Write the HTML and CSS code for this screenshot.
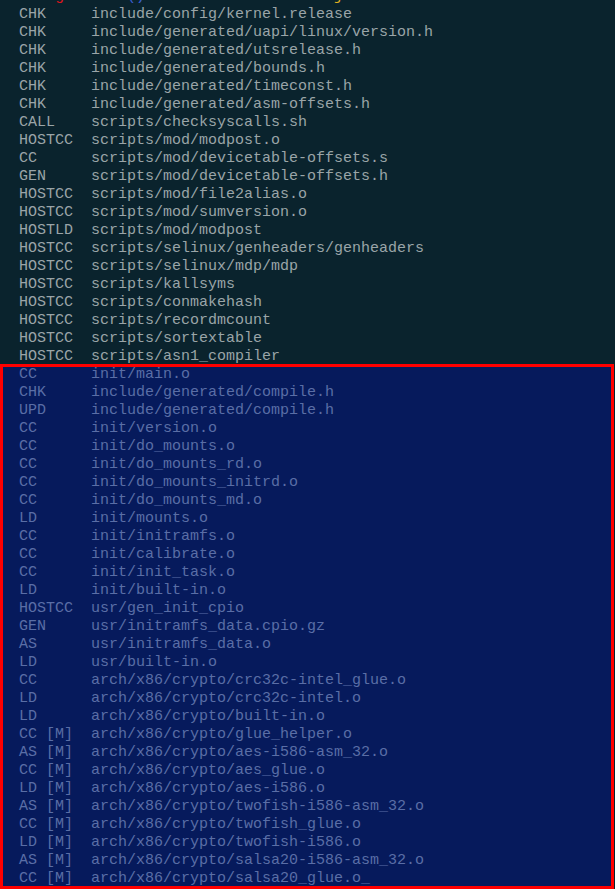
FILE: index.html
```html
<!DOCTYPE html>
<html>
<head>
<meta charset="utf-8">
<link rel="stylesheet" href="styles.css">
</head>
<body>
<div class="term">
<pre class="out"><span class="ln">    <span class="red">g</span>       <span class="blue">()</span>                     <span class="yel">j</span></span>
CHK     include/config/kernel.release
CHK     include/generated/uapi/linux/version.h
CHK     include/generated/utsrelease.h
CHK     include/generated/bounds.h
CHK     include/generated/timeconst.h
CHK     include/generated/asm-offsets.h
CALL    scripts/checksyscalls.sh
HOSTCC  scripts/mod/modpost.o
CC      scripts/mod/devicetable-offsets.s
GEN     scripts/mod/devicetable-offsets.h
HOSTCC  scripts/mod/file2alias.o
HOSTCC  scripts/mod/sumversion.o
HOSTLD  scripts/mod/modpost
HOSTCC  scripts/selinux/genheaders/genheaders
HOSTCC  scripts/selinux/mdp/mdp
HOSTCC  scripts/kallsyms
HOSTCC  scripts/conmakehash
HOSTCC  scripts/recordmcount
HOSTCC  scripts/sortextable
HOSTCC  scripts/asn1_compiler</pre>
<pre class="out sel">CC      init/main.o
CHK     include/generated/compile.h
UPD     include/generated/compile.h
CC      init/version.o
CC      init/do_mounts.o
CC      init/do_mounts_rd.o
CC      init/do_mounts_initrd.o
CC      init/do_mounts_md.o
LD      init/mounts.o
CC      init/initramfs.o
CC      init/calibrate.o
CC      init/init_task.o
LD      init/built-in.o
HOSTCC  usr/gen_init_cpio
GEN     usr/initramfs_data.cpio.gz
AS      usr/initramfs_data.o
LD      usr/built-in.o
CC      arch/x86/crypto/crc32c-intel_glue.o
LD      arch/x86/crypto/crc32c-intel.o
LD      arch/x86/crypto/built-in.o
CC [M]  arch/x86/crypto/glue_helper.o
AS [M]  arch/x86/crypto/aes-i586-asm_32.o
CC [M]  arch/x86/crypto/aes_glue.o
LD [M]  arch/x86/crypto/aes-i586.o
AS [M]  arch/x86/crypto/twofish-i586-asm_32.o
CC [M]  arch/x86/crypto/twofish_glue.o
LD [M]  arch/x86/crypto/twofish-i586.o
AS [M]  arch/x86/crypto/salsa20-i586-asm_32.o
CC [M]  arch/x86/crypto/salsa20_glue.o_</pre>
</div>
</body>
</html>
```

FILE: styles.css
```css
html, body {
  margin: 0;
  padding: 0;
  background: #0a232d;
  height: 100%;
  overflow: hidden;
}

.term {
  margin-top: -12px;
}

.out {
  margin: 0;
  padding: 0 0 0 19px;
  font-family: "Liberation Mono", "DejaVu Sans Mono", monospace;
  font-size: 15px;
  line-height: 18px;
  color: #9aa5a8;
  white-space: pre;
}

.ln {
  color: transparent;
}

.red { color: #e0141c; }
.blue { color: #3a5fd0; }
.yel { color: #e0b020; }

.sel {
  width: 614px;
  box-sizing: border-box;
  margin-top: -2px;
  padding-top: 2px;
  padding-bottom: 1px;
  background: #061a5c;
  color: #5a6ea6;
  outline: 3px solid #ff0000;
  outline-offset: -3px;
}
```
